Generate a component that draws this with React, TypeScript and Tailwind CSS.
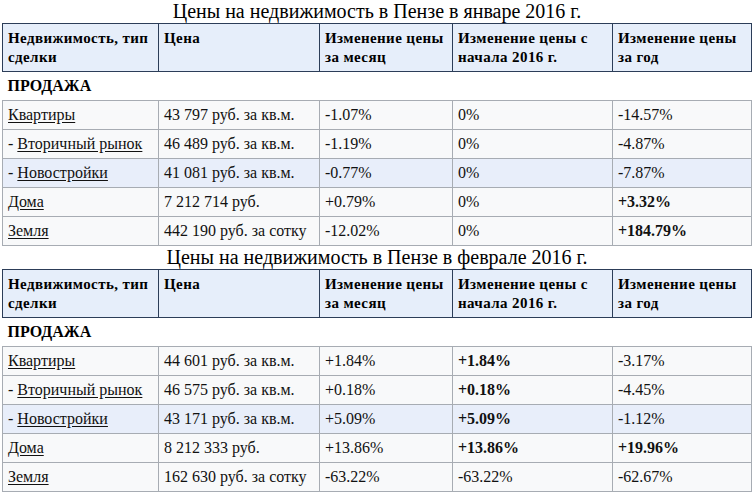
import React from "react";

type Cell = { text: string; bold?: boolean };
type Row = { prefix?: string; name: string; price: string; month: Cell; ytd: Cell; year: Cell; hl?: boolean };

const janRows: Row[] = [
  { name: "Квартиры", price: "43 797 руб. за кв.м.", month: { text: "-1.07%" }, ytd: { text: "0%" }, year: { text: "-14.57%" } },
  { prefix: "- ", name: "Вторичный рынок", price: "46 489 руб. за кв.м.", month: { text: "-1.19%" }, ytd: { text: "0%" }, year: { text: "-4.87%" } },
  { prefix: "- ", name: "Новостройки", price: "41 081 руб. за кв.м.", month: { text: "-0.77%" }, ytd: { text: "0%" }, year: { text: "-7.87%" }, hl: true },
  { name: "Дома", price: "7 212 714 руб.", month: { text: "+0.79%" }, ytd: { text: "0%" }, year: { text: "+3.32%", bold: true } },
  { name: "Земля", price: "442 190 руб. за сотку", month: { text: "-12.02%" }, ytd: { text: "0%" }, year: { text: "+184.79%", bold: true } },
];

const febRows: Row[] = [
  { name: "Квартиры", price: "44 601 руб. за кв.м.", month: { text: "+1.84%" }, ytd: { text: "+1.84%", bold: true }, year: { text: "-3.17%" } },
  { prefix: "- ", name: "Вторичный рынок", price: "46 575 руб. за кв.м.", month: { text: "+0.18%" }, ytd: { text: "+0.18%", bold: true }, year: { text: "-4.45%" } },
  { prefix: "- ", name: "Новостройки", price: "43 171 руб. за кв.м.", month: { text: "+5.09%" }, ytd: { text: "+5.09%", bold: true }, year: { text: "-1.12%" }, hl: true },
  { name: "Дома", price: "8 212 333 руб.", month: { text: "+13.86%" }, ytd: { text: "+13.86%", bold: true }, year: { text: "+19.96%", bold: true } },
  { name: "Земля", price: "162 630 руб. за сотку", month: { text: "-63.22%" }, ytd: { text: "-63.22%" }, year: { text: "-62.67%" } },
];

const th =
  "border border-[#2c3d58] bg-[#e6eefa] px-[5px] pt-[5px] pb-[4px] text-left align-top font-bold text-[15px] leading-[19px] tracking-[0.4px] text-black";
const td = "border border-[#a7acb3] px-[5px] py-[5px] text-[16px] leading-[18px]";

const PriceTable = ({ caption, rows }: { caption: string; rows: Row[] }) => (
  <table className="ml-[2px] w-[749px] table-fixed border-collapse">
    <caption className="text-[20px] leading-[23px] text-black">{caption}</caption>
    <colgroup>
      <col className="w-[156px]" />
      <col className="w-[161px]" />
      <col className="w-[133px]" />
      <col className="w-[160px]" />
      <col className="w-[139px]" />
    </colgroup>
    <thead>
      <tr>
        <th className={th}>Недвижимость, тип сделки</th>
        <th className={th}>Цена</th>
        <th className={th}>Изменение цены за месяц</th>
        <th className={th}>Изменение цены с начала 2016 г.</th>
        <th className={th}>Изменение цены за год</th>
      </tr>
    </thead>
    <tbody>
      <tr>
        <td colSpan={5} className="px-[5px] pt-[5px] pb-[5px] text-[16px] leading-[18px] font-bold text-black">
          ПРОДАЖА
        </td>
      </tr>
      {rows.map((r) => {
        const bg = r.hl ? "bg-[#e8eefa]" : "bg-[#f8f9fa]";
        return (
          <tr key={r.name} className={bg}>
            <td className={td}>
              {r.prefix}
              <span className="underline underline-offset-2">{r.name}</span>
            </td>
            <td className={td}>{r.price}</td>
            <td className={`${td} ${r.month.bold ? "font-bold" : ""}`}>{r.month.text}</td>
            <td className={`${td} ${r.ytd.bold ? "font-bold" : ""}`}>{r.ytd.text}</td>
            <td className={`${td} ${r.year.bold ? "font-bold" : ""}`}>{r.year.text}</td>
          </tr>
        );
      })}
    </tbody>
  </table>
);

export default function App() {
  return (
    <div className="w-[754px] h-[496px] overflow-hidden bg-white text-[#111] [font-family:'Liberation_Serif',serif]">
      <PriceTable caption="Цены на недвижимость в Пензе в январе 2016 г." rows={janRows} />
      <PriceTable caption="Цены на недвижимость в Пензе в феврале 2016 г." rows={febRows} />
    </div>
  );
}
